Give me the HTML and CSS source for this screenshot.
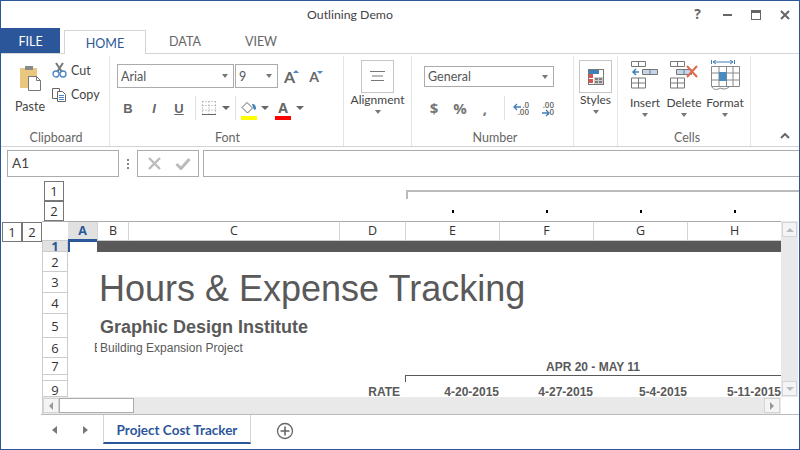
FILE: index.html
```html
<!DOCTYPE html>
<html lang="en">
<head>
    <meta charset="UTF-8">
    <title>Outlining Demo</title>
    <link rel="stylesheet" href="styles.css">
</head>
<body>
<div class="window">

    <div class="titlebar">
        <span class="title">Outlining Demo</span>
        <div class="winbuttons">
            <span class="help">?</span>
            <svg width="14" height="14" viewBox="0 0 14 14"><rect x="3" y="7" width="9" height="2" fill="#666"/></svg>
            <svg width="14" height="14" viewBox="0 0 14 14"><rect x="2.500" y="3.500" width="9" height="9" fill="none" stroke="#666"/><rect x="2" y="3" width="10" height="3" fill="#666"/></svg>
            <svg width="14" height="14" viewBox="0 0 14 14"><path d="M3 4l8 8M11 4l-8 8" stroke="#666" stroke-width="2" fill="none"/></svg>
        </div>
    </div>

    <div class="tabs">
        <div class="tab file">FILE</div>
        <div class="tab home">HOME</div>
        <div class="tab data">DATA</div>
        <div class="tab view">VIEW</div>
    </div>

    <!-- ribbon -->
    <div class="ribbon">
        <div class="group clipboard">
            <div class="group-body clip-body">
                <div class="paste">
                    <svg width="24" height="27" viewBox="0 0 24 27">
                        <rect x="1" y="3" width="17" height="20" fill="#e9c77f"/>
                        <rect x="6" y="1" width="8" height="4" fill="#8a8a8a"/>
                        <path d="M9.500 11.500h8l4 4v10h-12z" fill="#fff" stroke="#777"/>
                        <path d="M17.500 11.500v4h4" fill="none" stroke="#777"/>
                    </svg>
                    <span>Paste</span>
                </div>
                <div class="clip-small">
                    <div class="small-btn">
                        <svg width="15" height="16" viewBox="0 0 15 16">
                            <path d="M4 1l6 9M11 1l-6 9" stroke="#777" stroke-width="2" fill="none"/>
                            <circle cx="4" cy="12" r="3" fill="none" stroke="#4a86c0" stroke-width="1.300"/>
                            <circle cx="11" cy="12" r="3" fill="none" stroke="#4a86c0" stroke-width="1.300"/>
                        </svg>
                        <span>Cut</span>
                    </div>
                    <div class="small-btn">
                        <svg width="15" height="15" viewBox="0 0 15 15">
                            <path d="M.5 1.500h7v10h-7z" fill="#fff" stroke="#666"/>
                            <path d="M5.500 4.500h5l3 3v7h-8z" fill="#fff" stroke="#666"/>
                            <path d="M7 8.500h5M7 10.500h5M7 12.500h5" stroke="#4a86c0"/>
                        </svg>
                        <span>Copy</span>
                    </div>
                </div>
            </div>
            <div class="group-label clip-label">Clipboard</div>
        </div>

        <div class="group font">
            <div class="group-body">
                <div class="font-top">
                    <div class="combo font-name">Arial<i class="caret"></i></div>
                    <div class="combo font-size">9<i class="caret"></i></div>
                    <span class="grow">A<i class="up"></i></span>
                    <span class="shrink">A<i class="down"></i></span>
                </div>
                <div class="font-bottom">
                    <span class="fmt bold">B</span>
                    <span class="fmt italic">I</span>
                    <span class="fmt under">U</span>
                    <i class="vsep sep-borders"></i>
                    <svg class="borders" width="14" height="14" viewBox="0 0 14 14">
                        <path d="M.5.5h13M.5 4.500h13M.5 9h13M.5.5v13M7 .5v13M13.500.5v13" stroke="#999" stroke-dasharray="1 2" fill="none"/>
                        <path d="M0 13.500h14" stroke="#666"/>
                    </svg>
                    <i class="caret dark borders-caret"></i>
                    <i class="vsep sep-fill"></i>
                    <div class="colorbtn fill">
                        <svg width="16" height="13" viewBox="0 0 16 13">
                            <path d="M6 .5l5.500 5.500-5 5-5.500-5.500z" fill="#fff" stroke="#666"/>
                            <path d="M11 2c3 0 4 2 4 5l-2 1z" fill="#3f7fb8"/>
                        </svg>
                        <b class="swatch yellow"></b>
                    </div>
                    <i class="caret dark fill-caret"></i>
                    <div class="colorbtn color">
                        <span>A</span>
                        <b class="swatch red"></b>
                    </div>
                    <i class="caret dark color-caret"></i>
                </div>
            </div>
            <div class="group-label font-label">Font</div>
        </div>

        <div class="group alignment">
            <div class="group-body big-body">
                <div class="bigbox">
                    <svg width="15" height="12" viewBox="0 0 15 12"><path d="M0 .5h15M2 5h11M1 9.500h13" stroke="#777" fill="none"/></svg>
                </div>
                <span class="big-text">Alignment</span>
                <i class="caret"></i>
            </div>
        </div>

        <div class="group number">
            <div class="group-body">
                <div class="combo general">General<i class="caret"></i></div>
                <div class="number-bottom">
                    <span class="numfmt dollar">$</span>
                    <span class="numfmt percent">%</span>
                    <span class="numfmt comma">,</span>
                    <i class="vsep sep-dec"></i>
                    <svg class="dec-arrow" width="8" height="8" viewBox="0 0 8 8"><path d="M8 4H1M4 1L1 4l3 3" stroke="#3f7fb8" stroke-width="1.300" fill="none"/></svg>
                    <div class="dec dec-less"><span>.0</span><span>.00</span></div>
                    <div class="dec dec-more"><span>.00</span><span>.0</span></div>
                    <svg class="inc-arrow" width="8" height="8" viewBox="0 0 8 8"><path d="M0 4h7M4 1l3 3-3 3" stroke="#3f7fb8" stroke-width="1.300" fill="none"/></svg>
                </div>
            </div>
            <div class="group-label number-label">Number</div>
        </div>

        <div class="group styles">
            <div class="group-body big-body">
                <div class="bigbox">
                    <svg width="16" height="16" viewBox="0 0 16 16">
                        <rect x=".5" y=".5" width="15" height="15" fill="#fff" stroke="#777"/>
                        <rect x="1" y="1" width="10" height="4" fill="#3f7fb8"/>
                        <rect x="1" y="5" width="4" height="4" fill="#d9534f"/>
                        <rect x="1" y="10" width="4" height="4" fill="#d9534f"/>
                        <rect x="6" y="8" width="9" height="7" fill="#ccc"/>
                        <path d="M7 10h3M7 13h3M11 10h3M11 13h3" stroke="#333"/>
                    </svg>
                </div>
                <span class="big-text">Styles</span>
                <i class="caret"></i>
            </div>
        </div>

        <div class="group cells">
            <div class="group-body cells-body">
                <div class="cellbtn insert">
                    <svg width="28" height="29" viewBox="0 0 28 29">
                        <path d="M.5 .5h14v5H.5zM7.500.5v5M.5 17h14v10H.5zM.5 22h14M7.500 17v10" fill="#fff" stroke="#777"/>
                        <path d="M8 11H2M5 8l-3 3 3 3" stroke="#3f7fb8" stroke-width="1.500" fill="none"/>
                        <path d="M11.500 8.500h15v5h-15zM19 8.500v5" fill="#c6d6ea" stroke="#777"/>
                    </svg>
                    <span>Insert</span>
                    <i class="caret"></i>
                </div>
                <div class="cellbtn delete">
                    <svg width="29" height="29" viewBox="0 0 29 29">
                        <path d="M.5 .5h14v5H.5zM7.500.5v5M.5 17h14v10H.5zM.5 22h14M7.500 17v10" fill="#fff" stroke="#777"/>
                        <path d="M6.500 8.500h15v5h-15zM14 8.500v5" fill="#c6d6ea" stroke="#777"/>
                        <path d="M17 5l10 11M27 5L17 16" stroke="#e0694a" stroke-width="2" fill="none"/>
                    </svg>
                    <span>Delete</span>
                    <i class="caret"></i>
                </div>
                <div class="cellbtn format">
                    <svg width="29" height="31" viewBox="0 0 29 31">
                        <path d="M.5 0v4M23.500 0v4M2 2h20M5 0L2 2l3 2M19 0l3 2-3 2" stroke="#3f7fb8" fill="none"/>
                        <path d="M.5 6.500h28v20H.5zM.5 13h28M.5 20h28M8 6.500v20M15.500 6.500v20M22 6.500v20" fill="#fff" stroke="#888"/>
                        <rect x="8" y="12" width="7.500" height="9" fill="#4a8bbd"/>
                        <path d="M1 27c1 3 6 3 8 1l3 1c3 0 5-1 6-2" stroke="#888" fill="none"/>
                    </svg>
                    <span>Format</span>
                    <i class="caret"></i>
                </div>
            </div>
            <div class="group-label cells-label">Cells</div>
        </div>

        <div class="group collapse">
            <svg width="10" height="6" viewBox="0 0 10 6"><path d="M1 5l4-4 4 4" stroke="#666" stroke-width="2" fill="none"/></svg>
        </div>
    </div>

    <!-- formula bar -->
    <div class="formula">
        <div class="namebox">A1</div>
        <div class="grip"><i></i><i></i><i></i></div>
        <div class="fx-buttons">
            <svg width="15" height="13" viewBox="0 0 15 13"><path d="M2 1l11 11M13 1L2 12" stroke="#bbb" stroke-width="2.400" fill="none"/></svg>
            <svg width="16" height="13" viewBox="0 0 16 13"><path d="M1.500 7l4.500 4.500L14.500 2" stroke="#bbb" stroke-width="3" fill="none"/></svg>
        </div>
        <div class="fx-input"></div>
    </div>

    <!-- sheet -->
    <div class="sheet">
        <div class="level col-level-1">1</div>
        <div class="level col-level-2">2</div>
        <div class="col-bracket"></div>
        <div class="dot-cell ce"><i></i></div>
        <div class="dot-cell cf"><i></i></div>
        <div class="dot-cell cg"><i></i></div>
        <div class="dot-cell ch"><i></i></div>

        <div class="row-levels"><div class="level">1</div><div class="level">2</div></div>
        <div class="corner"></div>
        <div class="colhead ca current">A</div>
        <div class="colhead cb">B</div>
        <div class="colhead cc">C</div>
        <div class="colhead cd">D</div>
        <div class="colhead ce">E</div>
        <div class="colhead cf">F</div>
        <div class="colhead cg">G</div>
        <div class="colhead ch">H</div>

        <div class="rowhead r1 current">1</div>
        <div class="rowhead r2">2</div>
        <div class="rowhead r3">3</div>
        <div class="rowhead r4">4</div>
        <div class="rowhead r5">5</div>
        <div class="rowhead r6">6</div>
        <div class="rowhead r7">7</div>
        <div class="rowhead r8">8</div>
        <div class="rowhead r9">9</div>

        <div class="active-cell r1 ca"></div>
        <div class="banner r1"></div>
        <div class="cell heading">Hours &amp; Expense Tracking</div>
        <div class="cell company r5">Graphic Design Institute</div>
        <div class="cell clipped r6 ca">E</div>
        <div class="cell project r6">Building Expansion Project</div>
        <div class="cell range r7">APR 20 - MAY 11</div>
        <div class="range-bracket"></div>
        <div class="cell hdr r9 cd rate">RATE</div>
        <div class="cell hdr r9 ce">4-20-2015</div>
        <div class="cell hdr r9 cf">4-27-2015</div>
        <div class="cell hdr r9 cg">5-4-2015</div>
        <div class="cell hdr r9 ch">5-11-2015</div>

        <div class="vscroll">
            <div class="sbtn"><i class="tri tri-up"></i></div>
            <div class="sbtn"><i class="tri tri-down"></i></div>
        </div>
        <div class="hscroll">
            <div class="sbtn"><i class="tri tri-left"></i></div>
            <div class="thumb"></div>
            <div class="sbtn end"><i class="tri tri-right"></i></div>
        </div>
    </div>
    <div class="sheet-rule"></div>

    <!-- sheet tabs -->
    <div class="sheettabs">
        <i class="nav nav-left"></i>
        <i class="nav nav-right"></i>
        <div class="sheettab">Project Cost Tracker</div>
        <svg class="addsheet" width="18" height="18" viewBox="0 0 18 18">
            <circle cx="9" cy="9" r="7.500" fill="none" stroke="#666" stroke-width="1.300"/>
            <path d="M9 4.500v9M4.500 9h9" stroke="#666" stroke-width="1.600"/>
        </svg>
    </div>
</div>
</body>
</html>
```

FILE: styles.css
```css
* {
    box-sizing: border-box;
}

body {
    margin: 0;
    font-family: Lato, "Open Sans", sans-serif;
    color: #444;
    background: #fff;
}

.window {
    width: 800px;
    height: 450px;
    border: 1px solid #2b579a;
    display: flex;
    flex-direction: column;
    overflow: hidden;
    background: #fff;
}

/* title bar */
.titlebar {
    height: 27px;
    flex: none;
    display: flex;
    align-items: center;
    justify-content: center;
    padding-right: 100px;
    position: relative;
}

.title {
    font-size: 12.300px;
    color: #444;
}

.winbuttons {
    position: absolute;
    right: 7px;
    top: 6px;
    display: flex;
    align-items: center;
    gap: 15px;
}

.help {
    font-family: "Open Sans", sans-serif;
    font-weight: 700;
    font-size: 14px;
    line-height: 14px;
    color: #666;
    margin-right: 4px;
}

/* tabs */
.tabs {
    height: 26px;
    flex: none;
    display: flex;
    align-items: flex-end;
    border-bottom: 1px solid #d4d4d4;
    font-size: 12.500px;
}

.tab {
    text-align: center;
    color: #666;
    height: 24px;
    line-height: 25px;
}

.tab.file {
    width: 59px;
    height: 25px;
    line-height: 28px;
    background: #2b579a;
    color: #fff;
}

.tab.home {
    width: 82px;
    margin-left: 4px;
    height: 24px;
    margin-bottom: -1px;
    background: #fff;
    border: 1px solid #d4d4d4;
    border-bottom: none;
    color: #2b579a;
    line-height: 25px;
}

.tab.data {
    width: 78px;
}

.tab.view {
    width: 74px;
}

/* ribbon */
.ribbon {
    height: 93px;
    flex: none;
    display: flex;
    border-bottom: 1px solid #d4d4d4;
    font-size: 12.500px;
    padding-top: 2px;
}

.group {
    display: flex;
    flex-direction: column;
    height: 90px;
    border-right: 1px solid #e4e4e4;
}

.group-body {
    flex: 1;
}

.group-label {
    height: 20px;
    text-align: center;
    color: #666;
    line-height: 24px;
}

.clip-label,
.font-label {
    padding-left: 2px;
}

.number-label {
    padding-left: 5px;
}

.caret {
    display: inline-block;
    width: 0;
    height: 0;
    border-left: 3.500px solid transparent;
    border-right: 3.500px solid transparent;
    border-top: 4px solid #777;
}

.caret.dark {
    border-left-width: 4px;
    border-right-width: 4px;
    border-top-width: 4px;
    border-top-color: #666;
}

.clipboard {
    width: 109px;
}

.clip-body {
    display: flex;
    padding: 9px 0 0 15px;
}

.paste {
    width: 28px;
    display: flex;
    flex-direction: column;
    align-items: center;
    gap: 7px;
}

.paste svg {
    margin-left: 2px;
}

.clip-small {
    margin: -3px 0 0 8px;
    display: flex;
    flex-direction: column;
    gap: 8px;
}

.small-btn {
    display: flex;
    align-items: center;
    gap: 4px;
    height: 16px;
}

.font {
    width: 234px;
}

.font-top {
    display: flex;
    align-items: center;
    padding: 8px 0 0 7px;
}

.combo {
    height: 24px;
    border: 1px solid #ababab;
    display: flex;
    align-items: center;
    justify-content: space-between;
    padding: 0 5px 0 3px;
    color: #555;
}

.font-name {
    width: 117px;
}

.font-size {
    width: 43px;
    margin-left: 1px;
}

.grow,
.shrink {
    position: relative;
    font-weight: 700;
    color: #666;
}

.grow {
    font-size: 16px;
    margin-left: 6px;
}

.shrink {
    font-size: 14px;
    margin-left: 14px;
}

.up,
.down {
    position: absolute;
    top: 3px;
    right: -4px;
    border-left: 3px solid transparent;
    border-right: 3px solid transparent;
}

.up {
    border-bottom: 3px solid #4a86c0;
}

.down {
    border-top: 3px solid #4a86c0;
}

.font-bottom {
    display: flex;
    align-items: center;
    height: 24px;
    margin-top: 8px;
    padding-left: 13px;
}

.fmt {
    width: 10px;
    text-align: center;
    font-family: "Liberation Sans", sans-serif;
    font-size: 13px;
    font-weight: 700;
    color: #666;
}

.italic {
    font-style: italic;
    margin-left: 16px;
}

.under {
    text-decoration: underline;
    margin-left: 15px;
}

.vsep {
    width: 1px;
    height: 24px;
    background: #e1e1e1;
}

.sep-borders {
    margin-left: 11px;
}

.borders {
    margin-left: 6px;
}

.borders-caret {
    margin-left: 6px;
}

.sep-fill {
    margin-left: 5px;
}

.colorbtn {
    width: 16px;
    height: 24px;
    display: flex;
    flex-direction: column;
    align-items: center;
    justify-content: flex-end;
    position: relative;
}

.fill {
    margin-left: 5px;
}

.fill-caret {
    margin-left: 4px;
}

.color {
    margin-left: 6px;
    font-family: "Open Sans", sans-serif;
    font-weight: 700;
    font-size: 14px;
    line-height: 14px;
    color: #666;
}

.color-caret {
    margin-left: 5px;
}

.swatch {
    display: block;
    width: 16px;
    height: 4px;
    margin-top: 1px;
}

.yellow {
    background: #ffff00;
}

.red {
    background: #ff0000;
}

.big-body {
    display: flex;
    flex-direction: column;
    align-items: center;
    padding-top: 4px;
}

.bigbox {
    width: 33px;
    height: 33px;
    border: 1px solid #c6c6c6;
    display: flex;
    align-items: center;
    justify-content: center;
}

.big-text {
    font-size: 12px;
    line-height: 16px;
    margin-top: -1px;
}

.big-body .caret {
    margin-top: 2px;
}

.alignment {
    width: 68px;
}

.number {
    width: 162px;
}

.general {
    width: 130px;
    height: 21px;
    margin: 10px 0 0 12px;
}

.number-bottom {
    display: flex;
    align-items: center;
    height: 24px;
    margin-top: 9px;
    padding-left: 17px;
    font-family: "Open Sans", sans-serif;
    font-weight: 700;
    color: #777;
}

.numfmt {
    width: 10px;
    text-align: center;
    font-size: 15px;
}

.percent {
    width: 14px;
    margin-left: 14px;
}

.comma {
    margin-left: 13px;
    line-height: 14px;
}

.sep-dec {
    margin-left: 14px;
}

.dec-arrow {
    margin-left: 8px;
    align-self: flex-start;
    margin-top: 7px;
}

.dec {
    display: flex;
    flex-direction: column;
    align-items: flex-end;
    font-size: 8px;
    line-height: 7px;
    font-weight: 600;
    color: #666;
}

.dec-less {
    width: 8px;
}

.dec-more {
    margin-left: 13px;
    width: 12px;
}

.inc-arrow {
    margin-left: -12px;
    align-self: flex-start;
    margin-top: 13px;
}

.styles {
    width: 44px;
}

.cells {
    width: 133px;
}

.cells-body {
    display: flex;
    padding: 5px 0 0 8px;
}

.cells-label {
    padding-left: 6px;
}

.cellbtn {
    display: flex;
    flex-direction: column;
    align-items: center;
    font-size: 12px;
}

.cellbtn span {
    line-height: 16px;
    margin-top: 5px;
}

.cellbtn .caret {
    margin-top: 2px;
}

.insert {
    width: 38px;
}

.delete {
    width: 40px;
}

.format {
    width: 42px;
    margin-top: -1px;
}

.format span {
    margin-top: 4px;
}

.collapse {
    flex: 1;
    border: none;
    align-items: flex-end;
    justify-content: flex-end;
    padding: 0 9px 7px 0;
}

/* formula bar */
.formula {
    height: 34px;
    flex: none;
    display: flex;
    align-items: flex-start;
    padding: 3px 0 0 6px;
}

.namebox {
    width: 112px;
    height: 27px;
    border: 1px solid #ababab;
    font-size: 13.500px;
    line-height: 25px;
    padding-left: 4px;
}

.grip {
    width: 18px;
    height: 27px;
    display: flex;
    flex-direction: column;
    align-items: center;
    justify-content: center;
    gap: 2px;
}

.grip i {
    width: 2px;
    height: 2px;
    background: #888;
}

.fx-buttons {
    width: 62px;
    height: 27px;
    border: 1px solid #ababab;
    display: flex;
    align-items: center;
    gap: 13px;
    padding-left: 9px;
}

.fx-input {
    flex: 1;
    height: 27px;
    margin-left: 4px;
    border: 1px solid #ababab;
    border-right: none;
}

/* sheet */
.sheet {
    height: 233px;
    flex: none;
    display: grid;
    grid-template-columns: 41px 26px 29px 31px 211px 66px 94px 94px 94px 94px 18px;
    grid-template-rows: 20px 20px 20px 11px 20px 21px 21px 24px 20px 17px 6px 16px 17px;
    font-family: "Liberation Sans", sans-serif;
    color: #595959;
}

.level {
    width: 20px;
    height: 20px;
    border: 1px solid #777;
    font-family: "Open Sans", sans-serif;
    font-size: 13px;
    line-height: 18px;
    text-align: center;
    color: #333;
    background: #fff;
}

.col-level-1 {
    grid-column: 2;
    grid-row: 1;
    margin-left: 2px;
}

.col-level-2 {
    grid-column: 2;
    grid-row: 2;
    margin-left: 2px;
}

.col-bracket {
    grid-column: 7 / 12;
    grid-row: 1;
    margin-top: 9px;
    height: 9px;
    border-top: 2px solid #bbb;
    border-left: 2px solid #bbb;
    margin-left: 1px;
}

.dot-cell {
    grid-row: 2;
    display: flex;
    align-items: center;
    justify-content: center;
}

.dot-cell i {
    width: 2px;
    height: 3px;
    margin-left: 2px;
    background: #000;
}

.row-levels {
    grid-column: 1;
    grid-row: 3;
    display: flex;
    padding-left: 1px;
    margin-top: 1px;
}

.corner {
    grid-column: 2;
    grid-row: 3;
    border-top: 1px solid #aaa;
    border-bottom: 1px solid #ccc;
}

.colhead {
    grid-row: 3;
    border-top: 1px solid #aaa;
    border-bottom: 1px solid #ccc;
    border-left: 1px solid #d4d4d4;
    font-family: "Open Sans", sans-serif;
    font-size: 12.500px;
    line-height: 18px;
    text-align: center;
    color: #333;
}

.colhead.current {
    background: #e1e1e1;
    color: #2b579a;
    font-weight: 700;
    border-left: none;
    border-bottom: 2px solid #2b579a;
}

.rowhead {
    grid-column: 2;
    border-left: 1px solid #ccc;
    border-right: 1px solid #ccc;
    border-bottom: 1px solid #ccc;
    font-family: "Open Sans", sans-serif;
    font-size: 13px;
    line-height: 14px;
    text-align: center;
    color: #333;
    display: flex;
    align-items: center;
    justify-content: center;
    overflow: hidden;
}

.rowhead.current {
    background: #e1e1e1;
    color: #2b579a;
    font-weight: 700;
    line-height: 10px;
}

.rowhead.r8 {
    align-items: flex-start;
    padding-top: 2px;
}

.rowhead.r9 {
    padding-top: 2px;
}

.r1 { grid-row: 4; }
.r2 { grid-row: 5; }
.r3 { grid-row: 6; }
.r4 { grid-row: 7; }
.r5 { grid-row: 8; }
.r6 { grid-row: 9; }
.r7 { grid-row: 10; }
.r8 { grid-row: 11; }
.r9 { grid-row: 12; }

.ca { grid-column: 3; }
.cb { grid-column: 4; }
.cc { grid-column: 5; }
.cd { grid-column: 6; }
.ce { grid-column: 7; }
.cf { grid-column: 8; }
.cg { grid-column: 9; }
.ch { grid-column: 10; }

.active-cell {
    border-left: 2px solid #2b579a;
    border-top: 1px solid #2b579a;
}

.banner {
    grid-column: 4 / 11;
    background: #595959;
}

.cell {
    white-space: nowrap;
    overflow: hidden;
}

.heading {
    grid-column: 4 / 11;
    grid-row: 5 / 8;
    padding: 16px 0 0 2px;
    font-size: 36px;
    line-height: 42px;
}

.company {
    grid-column: 4 / 11;
    padding: 3px 0 0 3px;
    font-size: 18px;
    font-weight: 700;
    line-height: 21px;
}

.clipped {
    padding-left: 26px;
    font-size: 12px;
    line-height: 20px;
}

.project {
    grid-column: 4 / 11;
    padding-left: 3px;
    font-size: 12px;
    line-height: 20px;
}

.range {
    grid-column: 7 / 11;
    padding-top: 1px;
    text-align: center;
    font-size: 12px;
    font-weight: 700;
    line-height: 16px;
}

.range-bracket {
    grid-column: 7 / 11;
    grid-row: 11 / 13;
    height: 7px;
    border-top: 1px solid #595959;
    border-left: 1px solid #595959;
}

.hdr {
    font-size: 12px;
    font-weight: 700;
    line-height: 14px;
    padding-top: 2px;
    margin-top: 2px;
    text-align: right;
}

.rate {
    padding-right: 5px;
}

/* scrollbars */
.vscroll {
    grid-column: 11;
    grid-row: 3 / 13;
    background: #e9e9e9;
    display: flex;
    flex-direction: column;
    justify-content: space-between;
    padding: 1px;
    margin-right: 1px;
}

.sbtn {
    width: 16px;
    height: 15px;
    background: #f4f4f4;
    border: 1px solid #d4d4d4;
    display: flex;
    align-items: center;
    justify-content: center;
    flex: none;
}

.vscroll .sbtn {
    width: 15px;
}

.hscroll {
    grid-column: 2 / 11;
    grid-row: 13;
    background: #e9e9e9;
    border-left: 1px solid #ccc;
    display: flex;
    align-items: center;
    padding: 1px 0;
}

.thumb {
    width: 75px;
    height: 15px;
    background: #fff;
    border: 1px solid #ababab;
}

.sbtn.end {
    margin-left: auto;
    margin-right: 1px;
}

.tri {
    width: 0;
    height: 0;
    border: 4px solid transparent;
}

.tri-up {
    border-top: none;
    border-bottom: 4px solid #bbb;
}

.tri-down {
    border-bottom: none;
    border-top: 4px solid #bbb;
}

.tri-left {
    border-left: none;
    border-right: 4px solid #999;
}

.tri-right {
    border-right: none;
    border-left: 4px solid #999;
}

/* sheet tabs */
.sheet-rule {
    height: 1px;
    flex: none;
    margin-left: 40px;
    background: #bbb;
}

.sheettabs {
    flex: 1;
    display: flex;
    align-items: flex-start;
}

.nav {
    width: 0;
    height: 0;
    margin-top: 11px;
    border-top: 4.500px solid transparent;
    border-bottom: 4.500px solid transparent;
}

.nav-left {
    margin-left: 51px;
    border-right: 5px solid #777;
}

.nav-right {
    margin-left: 26px;
    border-left: 5px solid #777;
}

.sheettab {
    width: 148px;
    height: 29px;
    margin-left: 15px;
    border-left: 1px solid #d4d4d4;
    border-right: 1px solid #d4d4d4;
    border-bottom: 2px solid #2b579a;
    font-weight: 700;
    font-size: 13.500px;
    line-height: 30px;
    text-align: center;
    color: #2b579a;
}

.addsheet {
    margin: 7px 0 0 25px;
}
```
